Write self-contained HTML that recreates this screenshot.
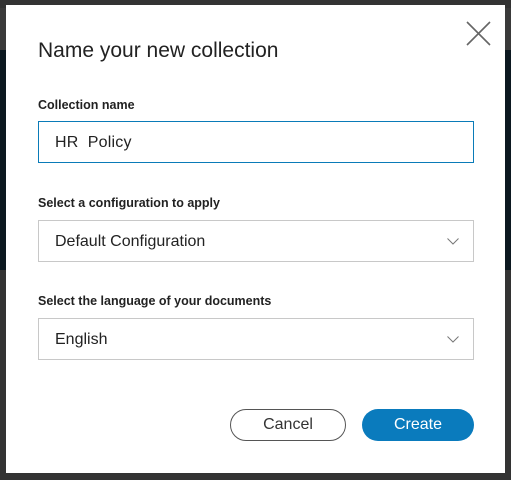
<!DOCTYPE html>
<html><head><style>
body{margin:0;width:511px;height:480px;background:#333;position:relative;overflow:hidden;font-family:"Liberation Sans",Arial,sans-serif;}
.band{position:absolute;left:0;width:511px}
.dlg{position:absolute;left:6px;top:5px;width:499px;height:468px;background:#fff}
.t{position:absolute;left:32px;top:34px;font-size:21px;color:#222}
.l{position:absolute;left:32px;font-size:12.5px;font-weight:bold;color:#222}
.f{position:absolute;left:32px;width:436px;height:42px;border:1px solid #c8c8c8;box-sizing:border-box;font-size:16px;color:#222;line-height:41px;padding-left:16px}
.f svg{position:absolute;right:14px;top:17px}
.b{position:absolute;top:404px;height:32px;border-radius:16px;box-sizing:border-box;font-size:16px;text-align:center;line-height:30px}
</style></head><body>
<div class="band" style="top:8px;height:42px;background:#3a3a3a"></div>
<div class="band" style="top:50px;height:220px;background:#0c1820"></div>
<div class="dlg">
<svg style="position:absolute;left:460px;top:16px" width="25" height="25"><path d="M1 1L24 24M24 1L1 24" stroke="#666" stroke-width="1.6"/></svg>
<div class="t">Name your new collection</div>
<div class="l" style="top:93px">Collection name</div>
<div class="f" style="top:116px;border:1px solid #0a7bb8;letter-spacing:0.2px">HR&nbsp; Policy</div>
<div class="l" style="top:191px">Select a configuration to apply</div>
<div class="f" style="top:215px">Default Configuration<svg width="12" height="7"><path d="M0.5 0.5L6 6L11.5 0.5" stroke="#777" fill="none" stroke-width="1"/></svg></div>
<div class="l" style="top:289px">Select the language of your documents</div>
<div class="f" style="top:313px">English<svg width="12" height="7"><path d="M0.5 0.5L6 6L11.5 0.5" stroke="#777" fill="none" stroke-width="1"/></svg></div>
<div class="b" style="left:224px;width:116px;border:1px solid #555;color:#333">Cancel</div>
<div class="b" style="left:356px;width:112px;background:#0a7bbd;color:#fff;line-height:32px">Create</div>
</div>
</body></html>
